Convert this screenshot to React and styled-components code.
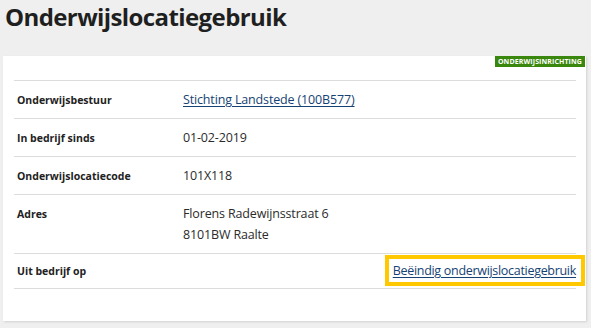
import React from 'react';
import styled, { createGlobalStyle } from 'styled-components';

const GlobalStyle = createGlobalStyle`
  html, body {
    margin: 0;
    padding: 0;
    background: #efefef;
  }
  body {
    font-family: "Open Sans", "Noto Sans", Arial, sans-serif;
    color: #222;
  }
`;

const Page = styled.div`
  width: 591px;
  height: 328px;
  box-sizing: border-box;
  padding: 0 5px 0 3px;
  overflow: hidden;
`;

const Title = styled.h1`
  margin: 0;
  padding: 0 0 0 2px;
  font-size: 24px;
  line-height: 34px;
  font-weight: 700;
  letter-spacing: -0.6px;
  color: #1f1f1f;
  height: 56px;
`;

const Card = styled.section`
  position: relative;
  background: #fff;
  box-shadow: 1px 1px 2px rgba(0, 0, 0, 0.12);
  padding: 24px 10px 32px 11px;
`;

const Badge = styled.span`
  position: absolute;
  top: 0;
  right: 1px;
  background: #39870c;
  color: #fff;
  font-size: 7px;
  font-weight: 700;
  line-height: 11px;
  padding: 0 3px;
  letter-spacing: 0.1px;
  text-transform: uppercase;
`;

const List = styled.dl`
  margin: 0;
  border-bottom: 1px solid #dcdcdc;
`;

const Row = styled.div`
  display: grid;
  grid-template-columns: 169px 1fr;
  align-items: ${props => props.center ? 'center' : 'start'};
  border-top: 1px solid #dcdcdc;
  padding: ${props => props.tight ? '1px 0 2px' : '8px 0 8px'};
  min-height: ${props => props.tight ? '31px' : 'auto'};
`;

const Label = styled.dt`
  margin: 0;
  padding-left: 3px;
  padding-top: ${props => props.center ? '0' : '3px'};
  font-size: 10.5px;
  font-weight: 700;
  line-height: 16px;
  color: #222;
`;

const Value = styled.dd`
  margin: 0;
  font-size: 12.5px;
  line-height: 21px;
  letter-spacing: -0.15px;
  color: #2b2b2b;
  text-align: ${props => props.right ? 'right' : 'left'};
`;

const Link = styled.a`
  color: #154273;
  text-decoration: underline;
  text-underline-offset: 2px;
`;

const FocusLink = styled(Link)`
  display: inline-block;
  border: 4px solid #ffc800;
  padding: 1px 5px 1px 4px;
  margin-right: -9px;
  letter-spacing: -0.3px;
`;

export default function App() {
  return (
    <Page>
      <GlobalStyle />
      <Title>Onderwijslocatiegebruik</Title>
      <Card>
        <Badge>Onderwijsinrichting</Badge>
        <List>
          <Row>
            <Label>Onderwijsbestuur</Label>
            <Value><Link href="#">Stichting Landstede (100B577)</Link></Value>
          </Row>
          <Row>
            <Label>In bedrijf sinds</Label>
            <Value>01-02-2019</Value>
          </Row>
          <Row>
            <Label>Onderwijslocatiecode</Label>
            <Value>101X118</Value>
          </Row>
          <Row>
            <Label>Adres</Label>
            <Value>Florens Radewijnsstraat 6<br />8101BW Raalte</Value>
          </Row>
          <Row center tight>
            <Label center>Uit bedrijf op</Label>
            <Value right><FocusLink href="#">Beëindig onderwijslocatiegebruik</FocusLink></Value>
          </Row>
        </List>
      </Card>
    </Page>
  );
}
